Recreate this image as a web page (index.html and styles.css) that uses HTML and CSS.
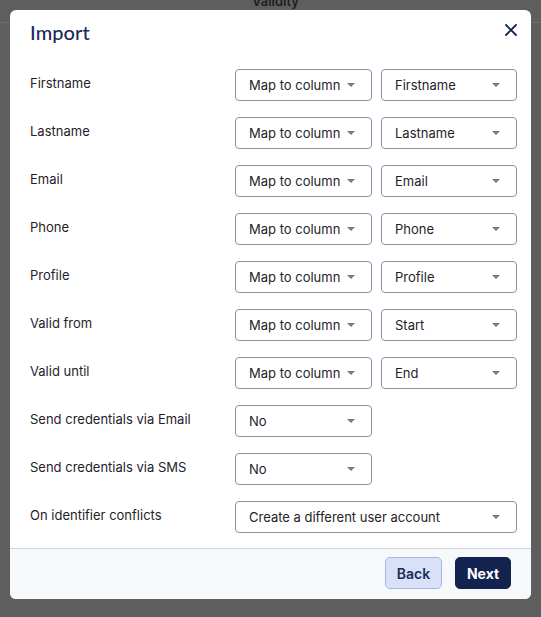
FILE: index.html
```html
<!DOCTYPE html>
<html lang="en">
<head>
<meta charset="utf-8">
<title>Import</title>
<link rel="stylesheet" href="styles.css">
</head>
<body>
<div class="page-behind"><span class="page-col">Validity</span></div>
<div class="modal">
  <div class="modal-header">
    <h2 class="modal-title">Import</h2>
    <button class="close" aria-label="Close">
      <svg width="14" height="14" viewBox="0 0 14 14"><path d="M2 2 L12 12 M12 2 L2 12" stroke="#13234f" stroke-width="1.8" stroke-linecap="round" fill="none"/></svg>
    </button>
  </div>
  <div class="modal-body">
    <div class="row"><div class="label">Firstname</div><div class="controls"><div class="select sm">Map to column<span class="caret"></span></div><div class="select sm">Firstname<span class="caret"></span></div></div></div>
    <div class="row"><div class="label">Lastname</div><div class="controls"><div class="select sm">Map to column<span class="caret"></span></div><div class="select sm">Lastname<span class="caret"></span></div></div></div>
    <div class="row"><div class="label">Email</div><div class="controls"><div class="select sm">Map to column<span class="caret"></span></div><div class="select sm">Email<span class="caret"></span></div></div></div>
    <div class="row"><div class="label">Phone</div><div class="controls"><div class="select sm">Map to column<span class="caret"></span></div><div class="select sm">Phone<span class="caret"></span></div></div></div>
    <div class="row"><div class="label">Profile</div><div class="controls"><div class="select sm">Map to column<span class="caret"></span></div><div class="select sm">Profile<span class="caret"></span></div></div></div>
    <div class="row"><div class="label">Valid from</div><div class="controls"><div class="select sm">Map to column<span class="caret"></span></div><div class="select sm">Start<span class="caret"></span></div></div></div>
    <div class="row"><div class="label">Valid until</div><div class="controls"><div class="select sm">Map to column<span class="caret"></span></div><div class="select sm">End<span class="caret"></span></div></div></div>
    <div class="row"><div class="label">Send credentials via Email</div><div class="controls"><div class="select sm">No<span class="caret"></span></div></div></div>
    <div class="row"><div class="label">Send credentials via SMS</div><div class="controls"><div class="select sm">No<span class="caret"></span></div></div></div>
    <div class="row"><div class="label">On identifier conflicts</div><div class="controls"><div class="select wide">Create a different user account<span class="caret"></span></div></div></div>
  </div>
  <div class="modal-footer">
    <button class="btn btn-back">Back</button>
    <button class="btn btn-next">Next</button>
  </div>
</div>
</body>
</html>
```
FILE: styles.css
```css
* { box-sizing: border-box; }
html, body { margin: 0; padding: 0; }
body {
  background: #5e5e5e;
  font-family: Inter, "Noto Sans", sans-serif;
  width: 541px;
  height: 617px;
  overflow: hidden;
  position: relative;
}
.page-behind {
  position: absolute;
  left: 0; top: 0;
  width: 541px;
  height: 23px;
  border-bottom: 1px solid #6e6e6e;
  text-align: center;
}
.page-col {
  position: relative;
  top: -10px;
  font-size: 13px;
  font-weight: 600;
  color: #1e1e1e;
  margin-left: 10px;
}
.modal {
  position: absolute;
  left: 10px;
  top: 10px;
  width: 521px;
  height: 589px;
  background: #fff;
  border-radius: 6px;
  overflow: hidden;
  display: flex;
  flex-direction: column;
}
.modal-header {
  display: flex;
  justify-content: space-between;
  align-items: flex-start;
  padding: 8px 13px 0 20px;
  height: 59px;
}
.modal-title {
  margin: 0;
  font-family: Lato, "Open Sans", sans-serif;
  font-weight: 500;
  font-size: 20px;
  line-height: 28px;
  color: #1a2a5a;
  letter-spacing: 0.1px;
}
.close {
  border: 0;
  background: transparent;
  padding: 0;
  margin-top: 5px;
  width: 14px;
  height: 14px;
  display: flex;
}
.modal-body {
  flex: 1;
  padding: 0 14px 0 20px;
  display: flex;
  flex-direction: column;
  gap: 16px;
}
.row {
  display: flex;
  align-items: flex-start;
}
.label {
  width: 205px;
  padding-top: 6px;
  font-size: 13px;
  line-height: 16px;
  color: #1f2329;
}
.controls {
  display: flex;
  gap: 9px;
}
.select {
  position: relative;
  height: 32px;
  border: 1px solid #8a93a5;
  border-radius: 4px;
  padding-left: 13px;
  font-size: 13px;
  line-height: 30px;
  color: #1f2329;
}
.select.sm { width: 137px; }
.select.sm + .select.sm { width: 136px; }
.select.wide { width: 282px; }
.caret {
  position: absolute;
  right: 16px;
  top: 13px;
  width: 0; height: 0;
  border-left: 4px solid transparent;
  border-right: 4px solid transparent;
  border-top: 4px solid #7a7a7a;
}
.modal-footer {
  height: 51px;
  border-top: 1px solid #cfd6e2;
  background: #f7f8fa;
  display: flex;
  justify-content: flex-end;
  align-items: flex-start;
  gap: 13px;
  padding: 8px 20px 0 0;
}
.btn {
  height: 32px;
  border-radius: 5px;
  font-family: Inter, "Noto Sans", sans-serif;
  font-size: 14px;
  font-weight: 600;
  padding: 0;
}
.btn-back {
  width: 57px;
  background: #d8e1f7;
  border: 1px solid #a6b9e6;
  color: #1c2b55;
}
.btn-next {
  width: 56px;
  background: #13234f;
  border: 1px solid #13234f;
  color: #fff;
  font-weight: 700;
}
```
